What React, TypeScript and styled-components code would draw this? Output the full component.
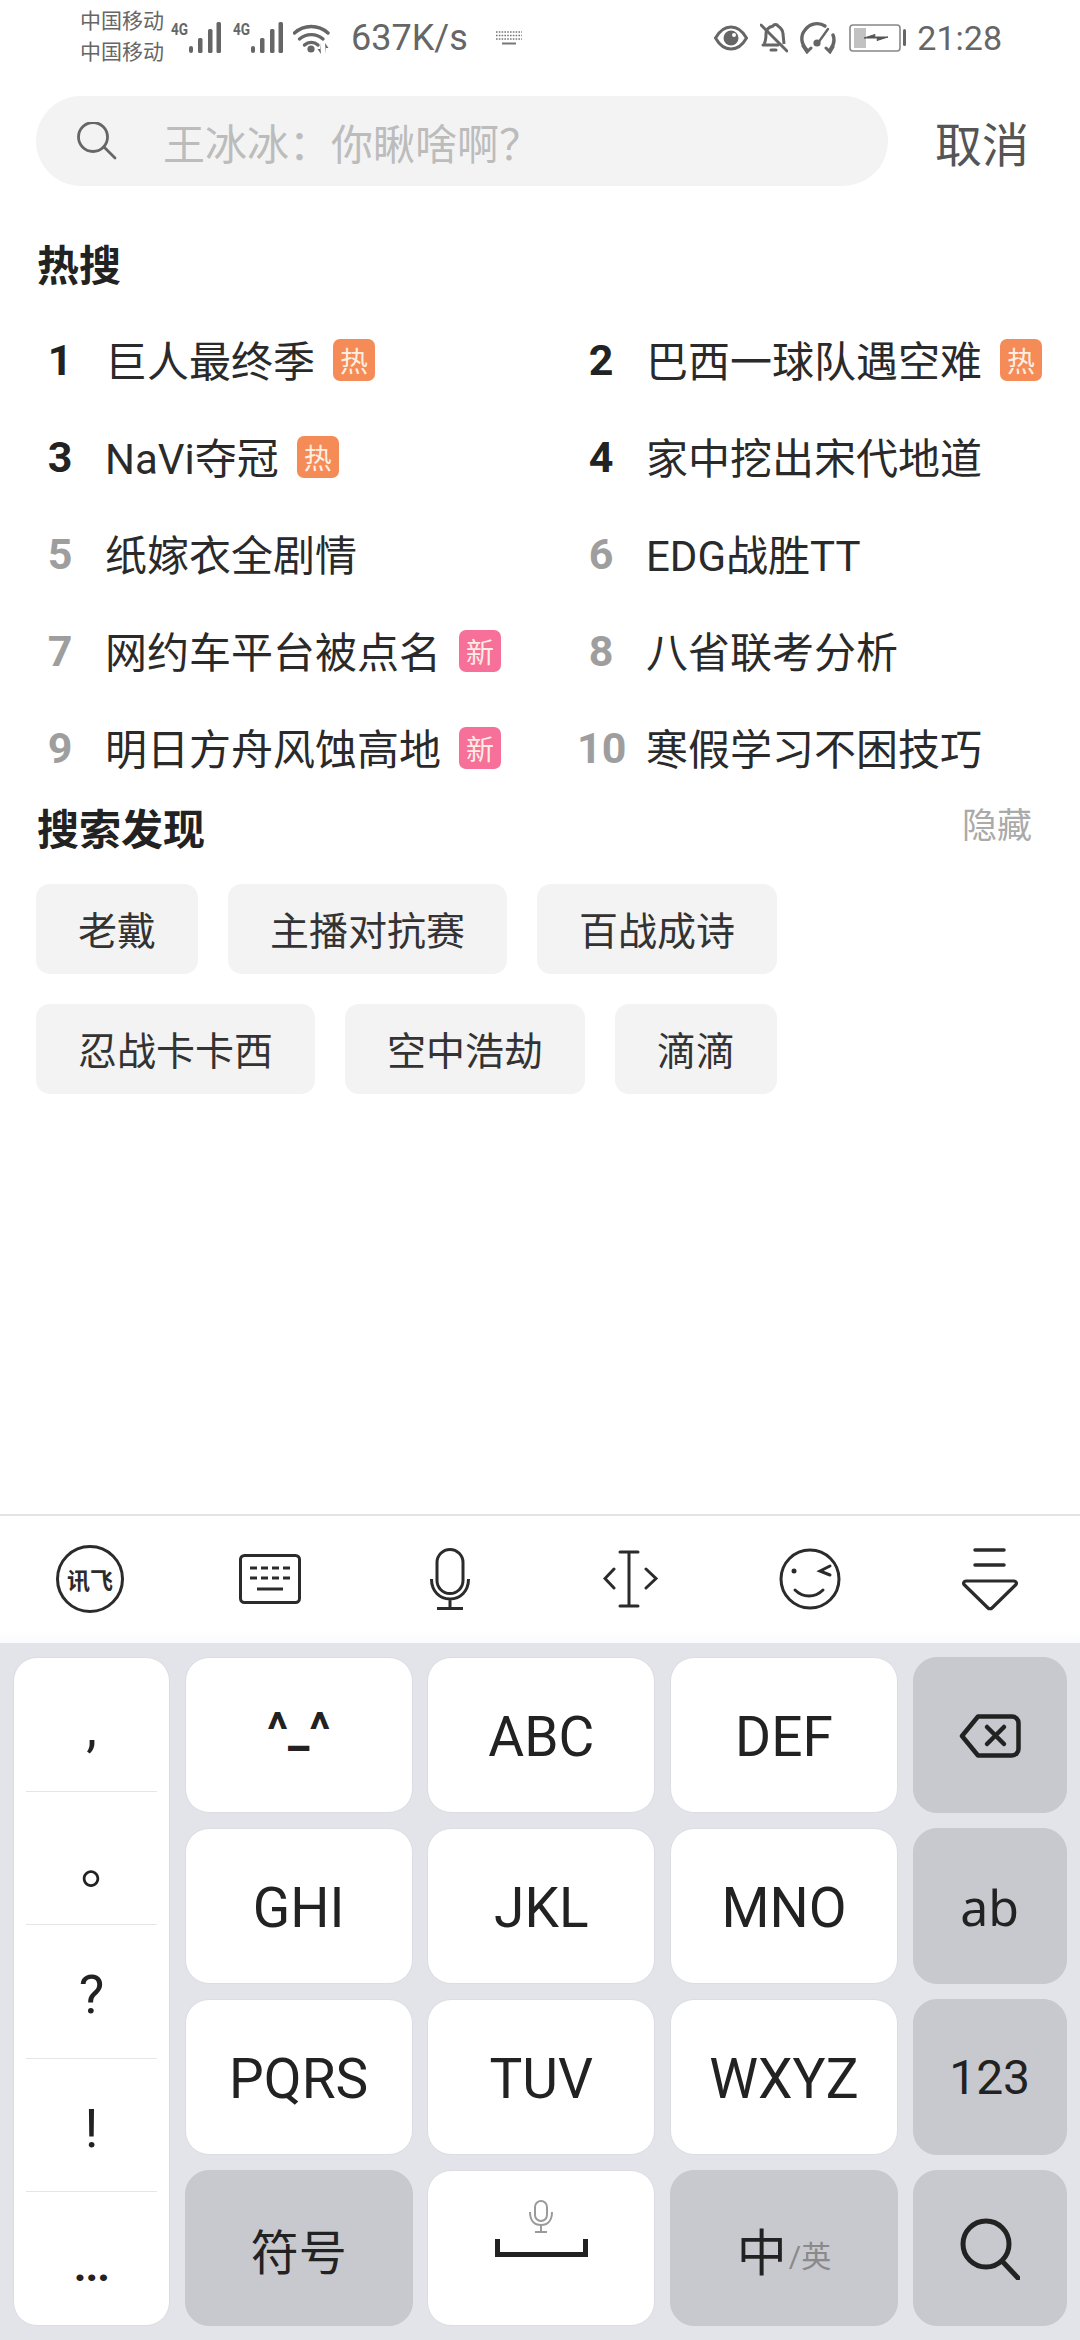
import styled, { createGlobalStyle } from "styled-components";

const GlobalStyle = createGlobalStyle`
  html, body { margin: 0; padding: 0; background: #fff; }
  body { font-family: Roboto, "Noto Sans CJK SC", sans-serif; }
`;

const Page = styled.div`
  width: 1080px;
  height: 2340px;
  display: flex;
  flex-direction: column;
  overflow: hidden;
  background: #fff;
`;

const StatusBar = styled.div`
  height: 75px;
  padding: 0 78px 0 80px;
  display: flex;
  align-items: center;
  color: #666;
  margin-bottom: 21px;
`;

const Carriers = styled.div`
  width: 91px;
  font-size: 21px;
  line-height: 31px;
  color: #666;
  margin-top: -2px;
`;

const NetTag = styled.span<{ $gap?: number }>`
  width: 18px;
  font-size: 17px;
  font-weight: 700;
  color: #666;
  transform: scaleX(0.8);
  transform-origin: left center;
  margin: -18px 0 0 ${(p) => p.$gap ?? 0}px;
  white-space: nowrap;
`;

const Speed = styled.span`
  font-size: 36px;
  margin-left: 20px;
`;

const Clock = styled.span`
  font-size: 34px;
  margin-left: 11px;
`;

const Spacer = styled.div`
  flex: 1;
`;

const Icon = styled.svg<{ $gap?: number }>`
  display: block;
  flex: none;
  margin-left: ${(p) => p.$gap ?? 0}px;
`;

const SearchRow = styled.div`
  display: flex;
  align-items: center;
  padding: 0 51px 0 36px;
`;

const SearchBox = styled.div`
  width: 852px;
  height: 90px;
  border-radius: 45px;
  background: #f3f3f3;
  display: flex;
  align-items: center;
  padding-left: 41px;
  box-sizing: border-box;
  gap: 46px;
`;

const Placeholder = styled.span`
  font-size: 42px;
  color: #bcbcbc;
`;

const Cancel = styled.span`
  margin-left: auto;
  font-size: 47px;
  color: #555;
`;

const SectionHead = styled.div<{ $top?: number }>`
  height: 56px;
  margin-top: ${(p) => p.$top ?? 0}px;
  padding: 0 48px 0 37px;
  display: flex;
  align-items: center;
  justify-content: space-between;
`;

const SectionTitle = styled.h2`
  margin: 0;
  font-size: 42px;
  font-weight: 700;
  color: #222;
`;

const HideLink = styled.span`
  font-size: 35px;
  color: #aaa;
  margin-top: -7px;
`;

const HotGrid = styled.div`
  display: grid;
  grid-template-columns: 541px 1fr;
  grid-auto-rows: 97px;
  padding-left: 36px;
  margin: 21px 0 2px;
`;

const HotItem = styled.div`
  display: flex;
  align-items: center;
`;

const Rank = styled.span<{ $top: boolean }>`
  width: 48px;
  margin-right: 21px;
  text-align: center;
  font-size: 43px;
  font-weight: 700;
  color: ${(p) => (p.$top ? "#222" : "#9e9e9e")};
`;

const HotText = styled.span`
  font-size: 42px;
  color: #2a2a2a;
  margin-top: -3px;
`;

const Badge = styled.span<{ $kind: "hot" | "new" }>`
  width: 42px;
  height: 42px;
  margin-left: 18px;
  border-radius: 7px;
  display: flex;
  align-items: center;
  justify-content: center;
  font-size: 28px;
  color: #ffeee2;
  background: ${(p) => (p.$kind === "hot" ? "#f58b56" : "#f6709a")};
`;

const Chips = styled.div`
  display: flex;
  flex-wrap: wrap;
  gap: 30px;
  padding: 0 36px;
  margin-top: 30px;
`;

const Chip = styled.span`
  height: 90px;
  padding: 0 42px 2px;
  box-sizing: border-box;
  border-radius: 14px;
  background: #f3f3f3;
  display: flex;
  align-items: center;
  font-size: 39px;
  color: #333;
`;

const Toolbar = styled.div`
  margin-top: auto;
  height: 127px;
  flex: none;
  border-top: 2px solid #e3e3e5;
  display: flex;
  background: linear-gradient(#fff 90%, #f9fafc);
`;

const ToolCell = styled.div`
  width: 180px;
  display: flex;
  align-items: center;
  justify-content: center;
  padding-bottom: 2px;
  box-sizing: border-box;
`;

const LogoCircle = styled.div`
  width: 68px;
  height: 68px;
  box-sizing: border-box;
  border: 3px solid #2b2b2b;
  border-radius: 50%;
  display: flex;
  align-items: center;
  justify-content: center;
  font-size: 23px;
  font-weight: 700;
  color: #2b2b2b;
`;

const Keyboard = styled.div`
  flex: none;
  height: 697px;
  box-sizing: border-box;
  padding: 14px 13px;
  background: #e2e4ea;
  display: grid;
  grid-template-columns: 157px 228px 228px 228px 154px;
  grid-template-rows: repeat(4, 156px);
  column-gap: 14.67px;
  row-gap: 15px;
`;

const SideColumn = styled.div`
  grid-row: 1 / span 4;
  background: #fff;
  border: 1px solid #dcdde2;
  border-radius: 24px;
  display: flex;
  flex-direction: column;
`;

const SideKey = styled.div<{ $shift?: number }>`
  flex: 1;
  margin: 0 12px;
  padding: 6px 0 0 ${(p) => p.$shift ?? 0}px;
  display: flex;
  align-items: center;
  justify-content: center;
  font-size: 54px;
  color: #222;
  border-bottom: 1px solid #e6e6e9;
  &:last-child { border-bottom: none; }
`;

const SideDots = styled.span`
  font-weight: 700;
  font-size: 44px;
  letter-spacing: -1px;
  margin-top: 8px;
`;

const Key = styled.div<{ $gray?: boolean; $size?: number }>`
  box-sizing: border-box;
  border-radius: 24px;
  padding-top: ${(p) => (p.$gray ? 1 : 4)}px;
  display: flex;
  align-items: center;
  justify-content: center;
  gap: 2px;
  font-size: ${(p) => p.$size ?? 55}px;
  color: #222;
  background: ${(p) => (p.$gray ? "#c8c9ce" : "#fff")};
  border: 1px solid ${(p) => (p.$gray ? "#c8c9ce" : "#dcdde2")};
`;

const FaceKey = styled(Key)`
  font-weight: 700;
  font-size: 48px;
  padding-bottom: 15px;
`;

const LetterCaseKey = styled(Key)`
  font-family: "Noto Sans", sans-serif;
  font-size: 50px;
`;

const SpaceStack = styled.div`
  display: flex;
  flex-direction: column;
  align-items: center;
  gap: 6px;
  padding-bottom: 43px;
`;

const LangMain = styled.span`
  font-size: 50px;
`;

const LangSub = styled.span`
  font-size: 30px;
  color: #8a8a8a;
  margin-top: 10px;
`;

const SignalBars = () => (
  <Icon width="32" height="31" viewBox="0 0 32 31">
    <rect x="0" y="24" width="4" height="7" rx="2" fill="#666" />
    <rect x="9" y="16" width="4.5" height="15" rx="1.5" fill="#666" />
    <rect x="19" y="7" width="4.5" height="24" rx="1.5" fill="#666" />
    <rect x="27.5" y="0" width="4.5" height="31" rx="1.5" fill="#666" />
  </Icon>
);

const hotList: { rank: number; text: string; badge?: "hot" | "new" }[] = [
  { rank: 1, text: "巨人最终季", badge: "hot" },
  { rank: 2, text: "巴西一球队遇空难", badge: "hot" },
  { rank: 3, text: "NaVi夺冠", badge: "hot" },
  { rank: 4, text: "家中挖出宋代地道" },
  { rank: 5, text: "纸嫁衣全剧情" },
  { rank: 6, text: "EDG战胜TT" },
  { rank: 7, text: "网约车平台被点名", badge: "new" },
  { rank: 8, text: "八省联考分析" },
  { rank: 9, text: "明日方舟风蚀高地", badge: "new" },
  { rank: 10, text: "寒假学习不困技巧" },
];

const chips = ["老戴", "主播对抗赛", "百战成诗", "忍战卡卡西", "空中浩劫", "滴滴"];

export default function App() {
  return (
    <Page>
      <GlobalStyle />
      <StatusBar>
        <Carriers>
          中国移动
          <br />
          中国移动
        </Carriers>
        <NetTag>4G</NetTag>
        <SignalBars />
        <NetTag $gap={12}>4G</NetTag>
        <SignalBars />
        <Icon width="38" height="32" viewBox="0 0 38 32" $gap={10}>
          <g fill="none" stroke="#666" strokeWidth="3.4" strokeLinecap="round">
            <path d="M1.5 11 A25 25 0 0 1 35 11" />
            <path d="M6.5 17 A18 18 0 0 1 30 17" />
            <path d="M11.5 23 A10 10 0 0 1 25 23" />
          </g>
          <circle cx="18" cy="27" r="3.6" fill="#666" />
          <path d="M27 21v6h-2.5l3.5 5zM33 32v-6h2.5l-3.5-5z" fill="#666" />
        </Icon>
        <Speed>637K/s</Speed>
        <Icon width="26" height="14" viewBox="0 0 26 14" $gap={28}>
          <g stroke="#777" strokeWidth="1.6" strokeDasharray="1.6 1.2">
            <path d="M0 1h26M0 4.5h26M0 8h26" />
          </g>
          <path d="M6 12.5h14" stroke="#777" strokeWidth="2" />
        </Icon>
        <Spacer />
        <Icon width="34" height="26" viewBox="0 0 34 26">
          <path d="M1.5 13C6 5 11 2 17 2s11 3 15.5 11C28 21 23 24 17 24S6 21 1.5 13Z" fill="none" stroke="#666" strokeWidth="3" />
          <circle cx="17" cy="13" r="7.5" fill="#666" />
          <circle cx="20" cy="10" r="2" fill="#fff" />
        </Icon>
        <Icon width="28" height="31" viewBox="0 0 28 31" $gap={12}>
          <path d="M4 22c2-3 2-6 2-10 0-4 3-7 7-8 1-2 4-2 5 0 3 2 5 4 5 8l1 10" fill="none" stroke="#666" strokeWidth="3" />
          <path d="M3 23h15M11 28h5" stroke="#666" strokeWidth="3" strokeLinecap="round" />
          <path d="M1 3l26 26" stroke="#666" strokeWidth="3" strokeLinecap="round" />
        </Icon>
        <Icon width="38" height="33" viewBox="0 0 38 33" $gap={11}>
          <path d="M8 29C2 23 1 15 6 9c5-7 14-8 20-4" fill="none" stroke="#666" strokeWidth="3.4" strokeLinecap="round" />
          <path d="M34 14c2 5 1 10-3 15" fill="none" stroke="#666" strokeWidth="3.4" strokeLinecap="round" />
          <path d="M4 25l4 6 4-4M27 27l4 4 3-5" fill="none" stroke="#666" strokeWidth="3" strokeLinecap="round" />
          <path d="M19 22L29 8" stroke="#666" strokeWidth="2.4" strokeLinecap="round" />
          <circle cx="18" cy="22" r="3.6" fill="#666" />
        </Icon>
        <Icon width="57" height="28" viewBox="0 0 57 28" $gap={12}>
          <rect x="1" y="1" width="50" height="26" rx="3" fill="none" stroke="#888" strokeWidth="1.6" />
          <rect x="5" y="4" width="12" height="20" fill="#c2c2c2" />
          <path d="M15 14l11-3.500-.5 2.500H39l-11 3.500.5-2.500z" fill="#555" stroke="#555" strokeWidth="1" />
          <rect x="54" y="5" width="3" height="17" rx="1.5" fill="#666" />
        </Icon>
        <Clock>21:28</Clock>
      </StatusBar>

      <SearchRow>
        <SearchBox>
          <Icon width="40" height="38" viewBox="0 0 40 38">
            <circle cx="16" cy="15" r="14.5" fill="none" stroke="#666" strokeWidth="2.8" />
            <path d="M27 25l11 11" stroke="#666" strokeWidth="2.8" strokeLinecap="round" />
          </Icon>
          <Placeholder>王冰冰：你瞅啥啊？</Placeholder>
        </SearchBox>
        <Cancel>取消</Cancel>
      </SearchRow>

      <SectionHead $top={48}>
        <SectionTitle>热搜</SectionTitle>
      </SectionHead>
      <HotGrid>
        {hotList.map((item) => (
          <HotItem key={item.rank}>
            <Rank $top={item.rank <= 4}>{item.rank}</Rank>
            <HotText>{item.text}</HotText>
            {item.badge && <Badge $kind={item.badge}>{item.badge === "hot" ? "热" : "新"}</Badge>}
          </HotItem>
        ))}
      </HotGrid>

      <SectionHead>
        <SectionTitle>搜索发现</SectionTitle>
        <HideLink>隐藏</HideLink>
      </SectionHead>
      <Chips>
        {chips.map((c) => (
          <Chip key={c}>{c}</Chip>
        ))}
      </Chips>

      <Toolbar>
        <ToolCell>
          <LogoCircle>讯飞</LogoCircle>
        </ToolCell>
        <ToolCell>
          <Icon width="62" height="50" viewBox="0 0 62 50">
            <rect x="1.5" y="1.5" width="59" height="47" rx="4" fill="none" stroke="#2b2b2b" strokeWidth="3" />
            <path d="M11 14h40M11 24h40" stroke="#2b2b2b" strokeWidth="3" strokeDasharray="7 4" />
            <path d="M18 35h26" stroke="#2b2b2b" strokeWidth="3" />
          </Icon>
        </ToolCell>
        <ToolCell>
          <Icon width="40" height="62" viewBox="0 0 40 62">
            <rect x="7" y="1.5" width="26" height="44" rx="13" fill="none" stroke="#2b2b2b" strokeWidth="3" />
            <path d="M1.500 31c0 12 8 20 18.500 20s18.500-8 18.500-20M20 51v9M7 60.500h26" fill="none" stroke="#2b2b2b" strokeWidth="3" />
          </Icon>
        </ToolCell>
        <ToolCell>
          <Icon width="56" height="58" viewBox="0 0 56 58" $gap={2}>
            <path d="M17 2h18M26 2v54M17 56h18" fill="none" stroke="#2b2b2b" strokeWidth="3" strokeLinecap="round" />
            <path d="M11 19l-9 9.500 9 9.500M43 19l10 9.500-10 9.500" fill="none" stroke="#2b2b2b" strokeWidth="3" strokeLinecap="round" />
          </Icon>
        </ToolCell>
        <ToolCell>
          <Icon width="62" height="62" viewBox="0 0 62 62">
            <circle cx="31" cy="31" r="29" fill="none" stroke="#2b2b2b" strokeWidth="3" />
            <circle cx="15" cy="23" r="2.5" fill="#2b2b2b" />
            <path d="M51 18l-10 5 10 4M16 42c8 8 20 8 28 0" fill="none" stroke="#2b2b2b" strokeWidth="3" strokeLinecap="round" />
          </Icon>
        </ToolCell>
        <ToolCell>
          <Icon width="56" height="64" viewBox="0 0 56 64">
            <path d="M13 3h29M13 18h29" stroke="#2b2b2b" strokeWidth="3.5" strokeLinecap="round" />
            <path d="M4 34h48c2 0 3 2 2 3.500L30 61c-1 1-3 1-4 0L2 37.500C1 36 2 34 4 34Z" fill="none" stroke="#2b2b2b" strokeWidth="3.2" strokeLinejoin="round" />
          </Icon>
        </ToolCell>
      </Toolbar>

      <Keyboard>
        <SideColumn>
          <SideKey>,</SideKey>
          <SideKey $shift={32}>。</SideKey>
          <SideKey>?</SideKey>
          <SideKey>!</SideKey>
          <SideKey>
            <SideDots>...</SideDots>
          </SideKey>
        </SideColumn>
        <FaceKey>^_^</FaceKey>
        <Key>ABC</Key>
        <Key>DEF</Key>
        <Key $gray>
          <Icon width="62" height="44" viewBox="0 0 62 44">
            <path d="M19 2.500h34c3.500 0 6.500 3 6.500 6.500v26c0 3.500-3 6.500-6.500 6.500H19L3 22Z" fill="none" stroke="#222" strokeWidth="4.5" strokeLinejoin="round" />
            <path d="M28 13l17 17M45 13L28 30" stroke="#222" strokeWidth="4.5" strokeLinecap="round" />
          </Icon>
        </Key>
        <Key>GHI</Key>
        <Key>JKL</Key>
        <Key>MNO</Key>
        <LetterCaseKey $gray>ab</LetterCaseKey>
        <Key>PQRS</Key>
        <Key>TUV</Key>
        <Key>WXYZ</Key>
        <Key $gray $size={48}>123</Key>
        <Key $gray $size={48}>符号</Key>
        <Key>
          <SpaceStack>
            <Icon width="24" height="33" viewBox="0 0 24 33">
              <rect x="6" y="1" width="12" height="20" rx="6" fill="none" stroke="#9a9a9a" strokeWidth="2" />
              <path d="M1 12c0 8 4 13 11 13s11-5 11-13M12 25v6M6 32h12" fill="none" stroke="#9a9a9a" strokeWidth="2" />
            </Icon>
            <Icon width="93" height="18" viewBox="0 0 93 18">
              <path d="M2.500 0v15.500h88V0" fill="none" stroke="#222" strokeWidth="5" />
            </Icon>
          </SpaceStack>
        </Key>
        <Key $gray>
          <LangMain>中</LangMain>
          <LangSub>/英</LangSub>
        </Key>
        <Key $gray>
          <Icon width="60" height="62" viewBox="0 0 60 62">
            <circle cx="26" cy="26" r="23" fill="none" stroke="#222" strokeWidth="5" />
            <path d="M42 43l16 17" stroke="#222" strokeWidth="5" strokeLinecap="round" />
          </Icon>
        </Key>
      </Keyboard>
    </Page>
  );
}
